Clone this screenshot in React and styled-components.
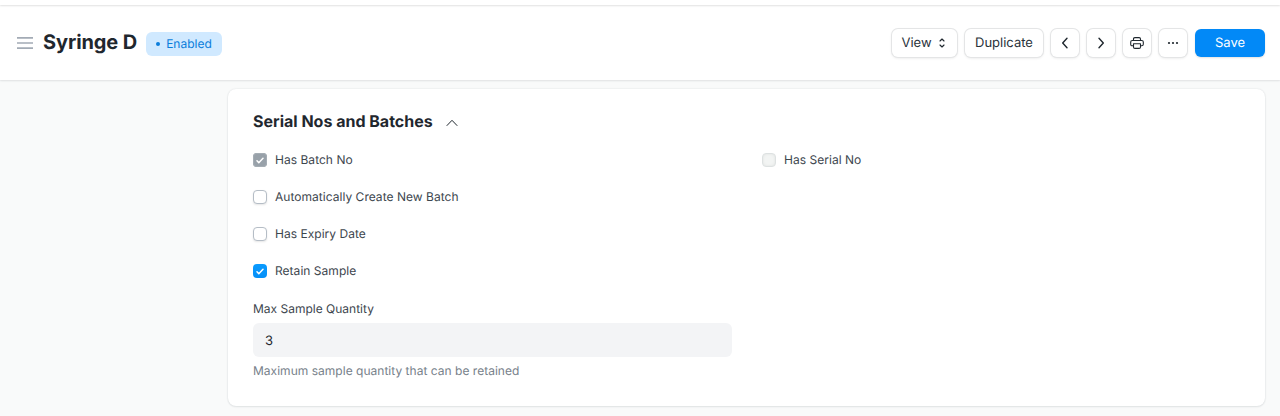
import React from "react";
import styled, { createGlobalStyle } from "styled-components";

const GlobalStyle = createGlobalStyle`
  *, *::before, *::after { box-sizing: border-box; }
  body {
    margin: 0;
    background: #f9fafa;
    font-family: Inter, "Liberation Sans", sans-serif;
    color: #1f272e;
    overflow: hidden;
    text-rendering: geometricPrecision;
  }
`;

const Page = styled.div`
  height: 416px;
  display: flex;
  flex-direction: column;
`;

const Navbar = styled.div`
  height: 5px;
  flex: none;
  background: #fff;
  box-shadow: 0 1px 2px rgba(0, 0, 0, 0.12);
  z-index: 2;
`;

const Header = styled.header`
  height: 75px;
  flex: none;
  display: flex;
  align-items: center;
  padding: 1px 15px 0 17px;
  background: #fff;
  box-shadow: 0 1px 2px rgba(25, 39, 52, 0.1), 0 0 1px rgba(25, 39, 52, 0.1);
  z-index: 1;
`;

const MenuIcon = styled.svg`
  width: 16px;
  height: 14px;
  margin-right: 10px;
`;

const Title = styled.h1`
  margin: 0;
  font-size: 20px;
  line-height: 28px;
  font-weight: 700;
  letter-spacing: -0.005em;
  padding-bottom: 2px;
`;

const Status = styled.span`
  display: flex;
  align-items: center;
  width: 76px;
  height: 24px;
  margin: 2px 0 0 9px;
  padding: 0 0 1px 10px;
  border-radius: 6px;
  background: #d0e9ff;
  color: #0b7ddb;
  font-size: 12px;
  &::before {
    content: "";
    width: 4px;
    height: 4px;
    margin-right: 6px;
    border-radius: 50%;
    background: currentColor;
  }
`;

const Actions = styled.div`
  display: flex;
  gap: 8px;
  margin-left: auto;
`;

const Button = styled.button`
  display: flex;
  align-items: center;
  justify-content: center;
  width: ${(p) => p.$width || 28}px;
  height: 28px;
  padding: 0 0 1px;
  border: 0;
  border-radius: 6px;
  background: ${(p) => (p.$primary ? "#0289f7" : "#fff")};
  color: ${(p) => (p.$primary ? "#fff" : "#29323a")};
  font: 400 13px/18px Inter, "Liberation Sans", sans-serif;
  text-rendering: inherit;
  box-shadow: ${(p) =>
    p.$primary
      ? "0 1px 2px rgba(0, 0, 0, 0.12)"
      : "0 0 0 1px #e4e5e6, 0 1px 3px rgba(0, 0, 0, 0.12)"};
  svg { display: block; position: relative; top: 0.5px; }
`;

const SelectIcon = styled.svg`
  margin: 0 3px 0 7px;
`;

const Main = styled.main`
  padding: 9px 15px 0 228px;
`;

const Card = styled.section`
  height: 317px;
  padding: 19px 25px;
  border-radius: 8px;
  background: #fff;
  box-shadow: 0 0 2px rgba(25, 39, 52, 0.12), 0 1px 2px rgba(25, 39, 52, 0.08);
`;

const SectionHead = styled.div`
  display: flex;
  align-items: center;
  height: 25px;
  svg { margin: 4px 0 0 13px; }
`;

const SectionTitle = styled.h2`
  margin: 0;
  font-size: 16px;
  line-height: 24px;
  font-weight: 700;
`;

const Columns = styled.div`
  display: grid;
  grid-template-columns: 479px 1fr;
  column-gap: 30px;
  margin-top: 18px;
`;

const CheckRow = styled.label`
  display: flex;
  align-items: center;
  height: 18px;
  margin-bottom: 19px;
  color: #3d464e;
  font-size: 12px;
  letter-spacing: 0.03px;
`;

const CheckText = styled.span`
  padding-bottom: 1px;
`;

const Box = styled.span`
  display: flex;
  align-items: center;
  justify-content: center;
  width: 14px;
  height: 14px;
  margin-right: 8px;
  border-radius: 4px;
  ${(p) =>
    ({
      empty: "background:#fff;border:1px solid #b5bdc6;box-shadow:0 1px 2px rgba(0,0,0,.1);",
      checked: "background:linear-gradient(#0a9bff,#058ff7);",
      checkedDisabled: "background:#98a1a9;box-shadow:inset 0 0 0 1px #a5adb4;",
      disabled: "background:#f2f4f3;border:1px solid #dde1e1;box-shadow:inset 0 0 3px rgba(0,0,0,.08);",
    })[p.$state]}
`;

const FieldLabel = styled.label`
  display: block;
  padding-top: 1px;
  color: #3d464e;
  font-size: 12px;
  line-height: 18px;
`;

const Field = styled.input`
  display: block;
  width: 100%;
  height: 34px;
  margin: 5px 0;
  padding: 1px 12px 0;
  border: 0;
  border-radius: 6px;
  outline: none;
  background: #f3f4f6;
  color: #1f272e;
  font: 400 13px Inter, "Liberation Sans", sans-serif;
  text-rendering: inherit;
`;

const Help = styled.p`
  margin: 0;
  color: #77818a;
  font-size: 12px;
  line-height: 18px;
  letter-spacing: 0.02px;
`;

function Check({ label, state = "empty" }) {
  return (
    <CheckRow>
      <Box $state={state}>
        {state.startsWith("checked") && (
          <svg width="8" height="7" viewBox="0 0 8 7" fill="none" stroke="#fff" strokeWidth="1.5" strokeLinecap="round" strokeLinejoin="round">
            <path d="M1 3.8 2.8 5.7 7 1.3" />
          </svg>
        )}
      </Box>
      <CheckText>{label}</CheckText>
    </CheckRow>
  );
}

const stroke = { fill: "none", stroke: "#1f272e", strokeLinecap: "round", strokeLinejoin: "round" };

export default function App() {
  return (
    <Page>
      <GlobalStyle />
      <Navbar />
      <Header>
        <MenuIcon viewBox="0 0 16 14" stroke="#a3abb5" strokeWidth="1.7">
          <path d="M0 1.9h16M0 7h16M0 12.1h16" />
        </MenuIcon>
        <Title>Syringe D</Title>
        <Status>Enabled</Status>
        <Actions>
          <Button $width={65}>
            View
            <SelectIcon width="6" height="10" viewBox="0 0 6 10" {...stroke} strokeWidth="1.15">
              <path d="M1 3 3 1l2 2M1 7l2 2 2-2" />
            </SelectIcon>
          </Button>
          <Button $width={78}>Duplicate</Button>
          <Button aria-label="Previous">
            <svg width="8" height="12" viewBox="0 0 8 12" {...stroke} strokeWidth="1.4">
              <path d="M6 1.3 1.7 6 6 10.7" />
            </svg>
          </Button>
          <Button aria-label="Next">
            <svg width="8" height="12" viewBox="0 0 8 12" {...stroke} strokeWidth="1.4">
              <path d="M2 1.3 6.3 6 2 10.7" />
            </svg>
          </Button>
          <Button aria-label="Print">
            <svg width="14" height="12" viewBox="0 0 14 12" {...stroke} strokeWidth="1.1">
              <path d="M3.5 3.5V2c0-.9.5-1.4 1.4-1.4h4.2c.9 0 1.4.5 1.4 1.4v1.5M3.5 8.8H2.3C1.2 8.8.7 8.3.7 7.3V5c0-1 .5-1.5 1.6-1.5h9.4c1.1 0 1.6.5 1.6 1.5v2.3c0 1-.5 1.5-1.6 1.5h-1.2M3.5 6.7h7V10c0 .9-.5 1.4-1.4 1.4H4.9c-.9 0-1.4-.5-1.4-1.4z" />
            </svg>
          </Button>
          <Button aria-label="More">
            <svg width="12" height="4" viewBox="0 0 12 4" fill="#1f272e">
              <circle cx="2" cy="2" r="1.1" />
              <circle cx="6" cy="2" r="1.1" />
              <circle cx="10" cy="2" r="1.1" />
            </svg>
          </Button>
          <Button $primary $width={70}>Save</Button>
        </Actions>
      </Header>
      <Main>
        <Card>
          <SectionHead>
            <SectionTitle>Serial Nos and Batches</SectionTitle>
            <svg width="12" height="8" viewBox="0 0 12 8" {...stroke}>
              <path d="M1 6.5 6 1.3l5 5.2" />
            </svg>
          </SectionHead>
          <Columns>
            <div>
              <Check label="Has Batch No" state="checkedDisabled" />
              <Check label="Automatically Create New Batch" />
              <Check label="Has Expiry Date" />
              <Check label="Retain Sample" state="checked" />
              <FieldLabel htmlFor="max-sample">Max Sample Quantity</FieldLabel>
              <Field id="max-sample" defaultValue="3" />
              <Help>Maximum sample quantity that can be retained</Help>
            </div>
            <div>
              <Check label="Has Serial No" state="disabled" />
            </div>
          </Columns>
        </Card>
      </Main>
    </Page>
  );
}
